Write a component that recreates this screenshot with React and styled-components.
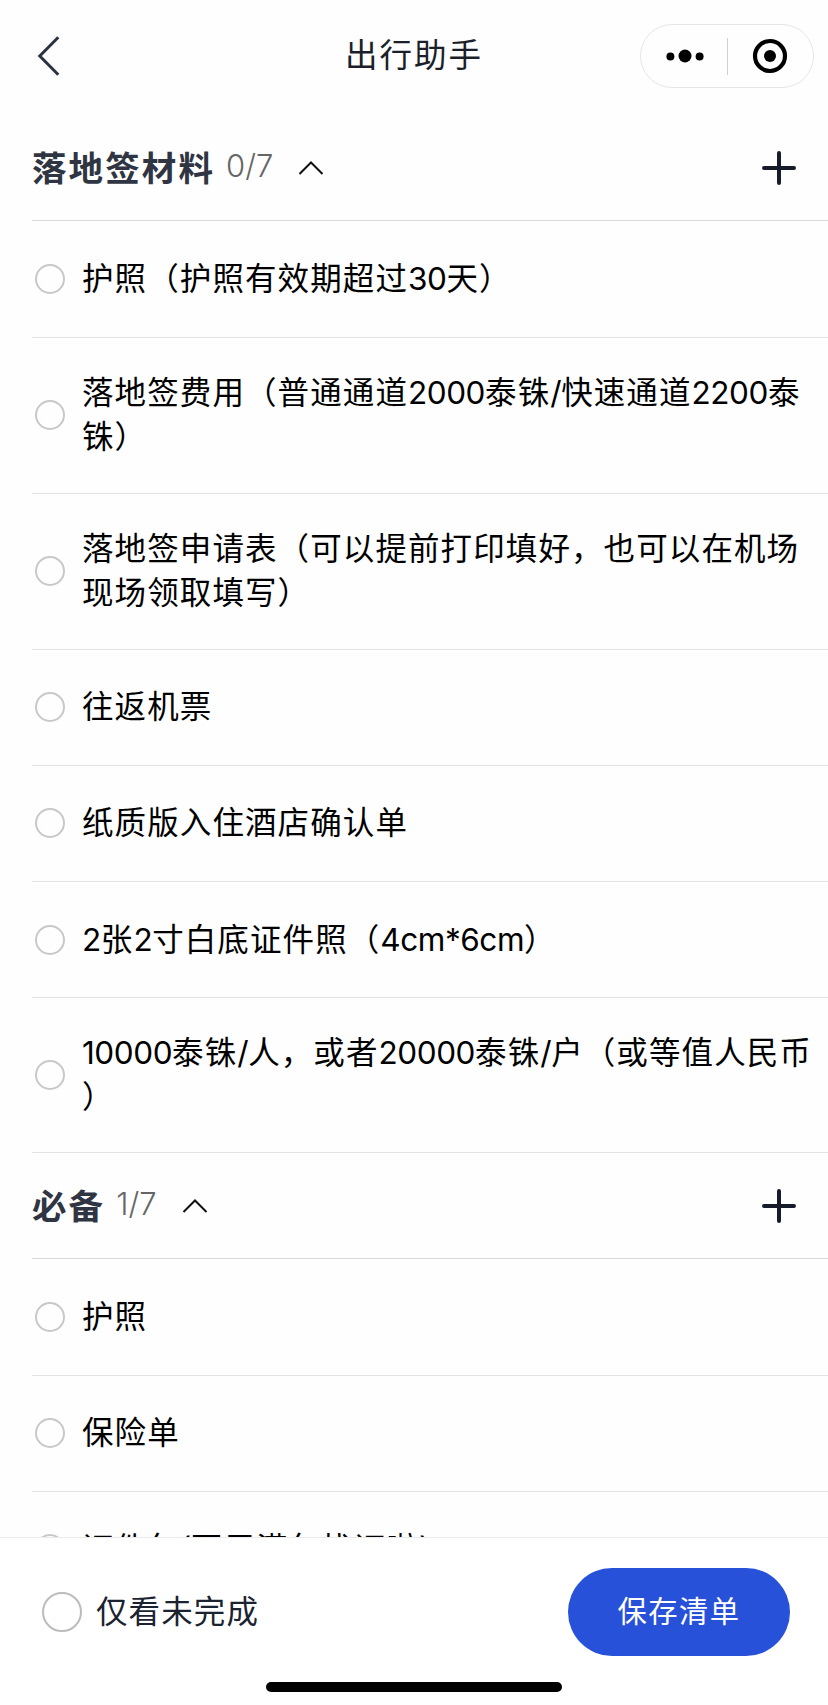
import styled, { createGlobalStyle } from "styled-components";
import { useState } from "react";

const GlobalStyle = createGlobalStyle`
	* {
		box-sizing: border-box;
	}
	body {
		margin: 0;
		background: #fefefe;
		font-family: Inter, "Noto Sans CJK SC", sans-serif;
	}
	button {
		padding: 0;
		border: 0 none;
		background: none;
		font-family: inherit;
		cursor: pointer;
	}
	svg {
		display: block;
	}
`;

const Page = styled.div`
	display: flex;
	flex-direction: column;
	width: 828px;
	height: 1705px;
	overflow: hidden;
`;

const NavBar = styled.header`
	display: grid;
	grid-template-columns: 1fr auto 1fr;
	align-items: center;
	flex: none;
	height: 112px;
	padding: 0 14px;

	h1 {
		margin: 0;
		color: #1b1f29;
		font-size: 32.5px;
		font-weight: 400;
		letter-spacing: 2px;
		line-height: 48px;
	}
`;

const BackBtn = styled.button`
	width: 34px;
	height: 48px;
	margin-left: 18px;
`;

const Capsule = styled.div`
	display: flex;
	align-items: center;
	justify-self: end;
	width: 174px;
	height: 64px;
	border: 1px solid #e6e6e6;
	border-radius: 32px;

	button {
		display: flex;
		align-items: center;
		justify-content: center;
		flex: 0 1 50%;
		height: 100%;
	}
	button:first-child {
		padding-left: 3px;
	}
`;

const CapsuleLine = styled.span`
	flex: none;
	width: 1px;
	height: 37px;
	background: #cfcfcf;
`;

const ListArea = styled.main`
	flex: 1;
	min-height: 0;
	overflow: hidden;
	padding: 3.05px 0 0 32px;
`;

const SectionHead = styled.div`
	display: flex;
	align-items: center;
	height: 106.4px;
	padding-right: 30px;
	border-bottom: 1px solid #d9d9d9;

	h2 {
		margin: 0;
		padding-top: 2px;
		color: #2f3542;
		font-size: 34.5px;
		font-weight: 700;
		letter-spacing: 2.1px;
		line-height: 48px;
	}
	.count {
		margin: 0 25px 4px 11px;
		color: #666;
		font-size: 31px;
		font-weight: 300;
		line-height: 44px;
	}
	.add {
		margin-left: auto;
	}
`;

const Row = styled.label`
	display: flex;
	align-items: center;
	height: ${({ $lines }) => ($lines > 1 ? 156 : 116.2)}px;
	padding-left: 3px;
	border-bottom: 1px solid #e2e2e2;
	cursor: pointer;

	&:last-child {
		height: ${({ $lines }) => ($lines > 1 ? 154.8 : 116.2)}px;
	}
`;

const Check = styled.input`
	appearance: none;
	flex: none;
	width: ${({ $size }) => $size}px;
	height: ${({ $size }) => $size}px;
	margin: 0;
	border: 2px solid ${({ $color }) => $color};
	border-radius: 50%;
	cursor: pointer;

	&:checked {
		border-color: #2851d9;
		background: #2851d9;
	}
`;

const RowText = styled.span`
	margin-left: 17px;
	color: #000;
	font-size: 31.5px;
	letter-spacing: 1.1px;
	line-height: 44px;
	white-space: pre;
`;

const Latin = styled.span`
	letter-spacing: -0.45px;
`;

const BottomBar = styled.footer`
	display: flex;
	flex-direction: column;
	align-items: center;
	flex: none;
	height: 168px;
	padding-top: 30px;
	border-top: 1px solid #ebebeb;
	background: #fff;
`;

const Actions = styled.div`
	display: flex;
	align-items: center;
	justify-content: space-between;
	width: 100%;
	height: 88px;
	padding: 0 38px 0 42px;

	label {
		display: flex;
		align-items: center;
		gap: 14px;
		color: #1b2230;
		font-size: 31.5px;
		letter-spacing: 1.1px;
		line-height: 44px;
		cursor: pointer;
	}
`;

const SaveBtn = styled.button`
	width: 222px;
	height: 88px;
	padding-bottom: 6px;
	border-radius: 44px;
	background: #2851d9;
	color: #fff;
	font-size: 29.3px;
	letter-spacing: 1.4px;
`;

const HomeIndicator = styled.div`
	width: 296px;
	height: 10px;
	margin-top: 26px;
	border-radius: 5px;
	background: #000;
`;

const sections = [
	{
		title: "落地签材料",
		done: 0,
		items: [
			"护照（护照有效期超过30天）",
			"落地签费用（普通通道2000泰铢/快速通道2200泰\n铢）",
			"落地签申请表（可以提前打印填好，也可以在机场\n现场领取填写）",
			"往返机票",
			"纸质版入住酒店确认单",
			"2张2寸白底证件照（4cm*6cm）",
			"10000泰铢/人，或者20000泰铢/户（或等值人民币\n）",
		],
	},
	{
		title: "必备",
		done: 1,
		items: ["护照", "保险单", "证件包(不用满包找证啦)"],
	},
];

// digits and latin letters are set tighter than the chinese text
const renderText = (text) =>
	text
		.split(/([\x20-\x7e]+)/)
		.map((part, i) => (i % 2 ? <Latin key={i}>{part}</Latin> : part));

const Section = ({ data }) => {
	const [open, setOpen] = useState(true);

	return (
		<section>
			<SectionHead>
				<h2>{data.title}</h2>
				<span className="count">{data.done}/7</span>
				<button onClick={() => setOpen(!open)} aria-label="toggle">
					<svg width="26" height="16" viewBox="0 0 26 16" fill="none">
						<path
							d={open ? "M1.5 14 13 2.5 24.5 14" : "M1.5 2 13 13.5 24.5 2"}
							stroke="#111"
							strokeWidth="2"
						/>
					</svg>
				</button>
				<button className="add" aria-label="add">
					<svg width="38" height="38" viewBox="0 0 38 38" fill="none">
						<path
							d="M19 4v30M4 19h30"
							stroke="#171c2c"
							strokeWidth="4"
							strokeLinecap="round"
						/>
					</svg>
				</button>
			</SectionHead>
			{open
				? data.items.map((item) => (
						<Row key={item} $lines={item.split("\n").length}>
							<Check type="checkbox" $size={30} $color="#c8c8c8" />
							<RowText>{renderText(item)}</RowText>
						</Row>
				  ))
				: null}
		</section>
	);
};

const App = () => {
	return (
		<Page>
			<GlobalStyle />
			<NavBar>
				<BackBtn aria-label="back">
					<svg width="34" height="48" viewBox="0 0 34 48" fill="none">
						<path d="M26.3 5.2 7.8 24l18.5 18.8" stroke="#2c3340" strokeWidth="3" />
					</svg>
				</BackBtn>
				<h1>出行助手</h1>
				<Capsule>
					<button aria-label="more">
						<svg width="38" height="14" viewBox="0 0 38 14">
							<circle cx="4.4" cy="7.5" r="4" />
							<circle cx="19" cy="7" r="6.5" />
							<circle cx="33.6" cy="7.5" r="4" />
						</svg>
					</button>
					<CapsuleLine />
					<button aria-label="close">
						<svg width="36" height="36" viewBox="0 0 36 36">
							<circle
								cx="18"
								cy="18"
								r="15"
								fill="none"
								stroke="#000"
								strokeWidth="4.2"
							/>
							<circle cx="18" cy="18" r="6" />
						</svg>
					</button>
				</Capsule>
			</NavBar>
			<ListArea>
				{sections.map((section) => (
					<Section key={section.title} data={section} />
				))}
			</ListArea>
			<BottomBar>
				<Actions>
					<label>
						<Check type="checkbox" $size={40} $color="#bcbcbc" />
						仅看未完成
					</label>
					<SaveBtn>保存清单</SaveBtn>
				</Actions>
				<HomeIndicator />
			</BottomBar>
		</Page>
	);
};

export default App;
